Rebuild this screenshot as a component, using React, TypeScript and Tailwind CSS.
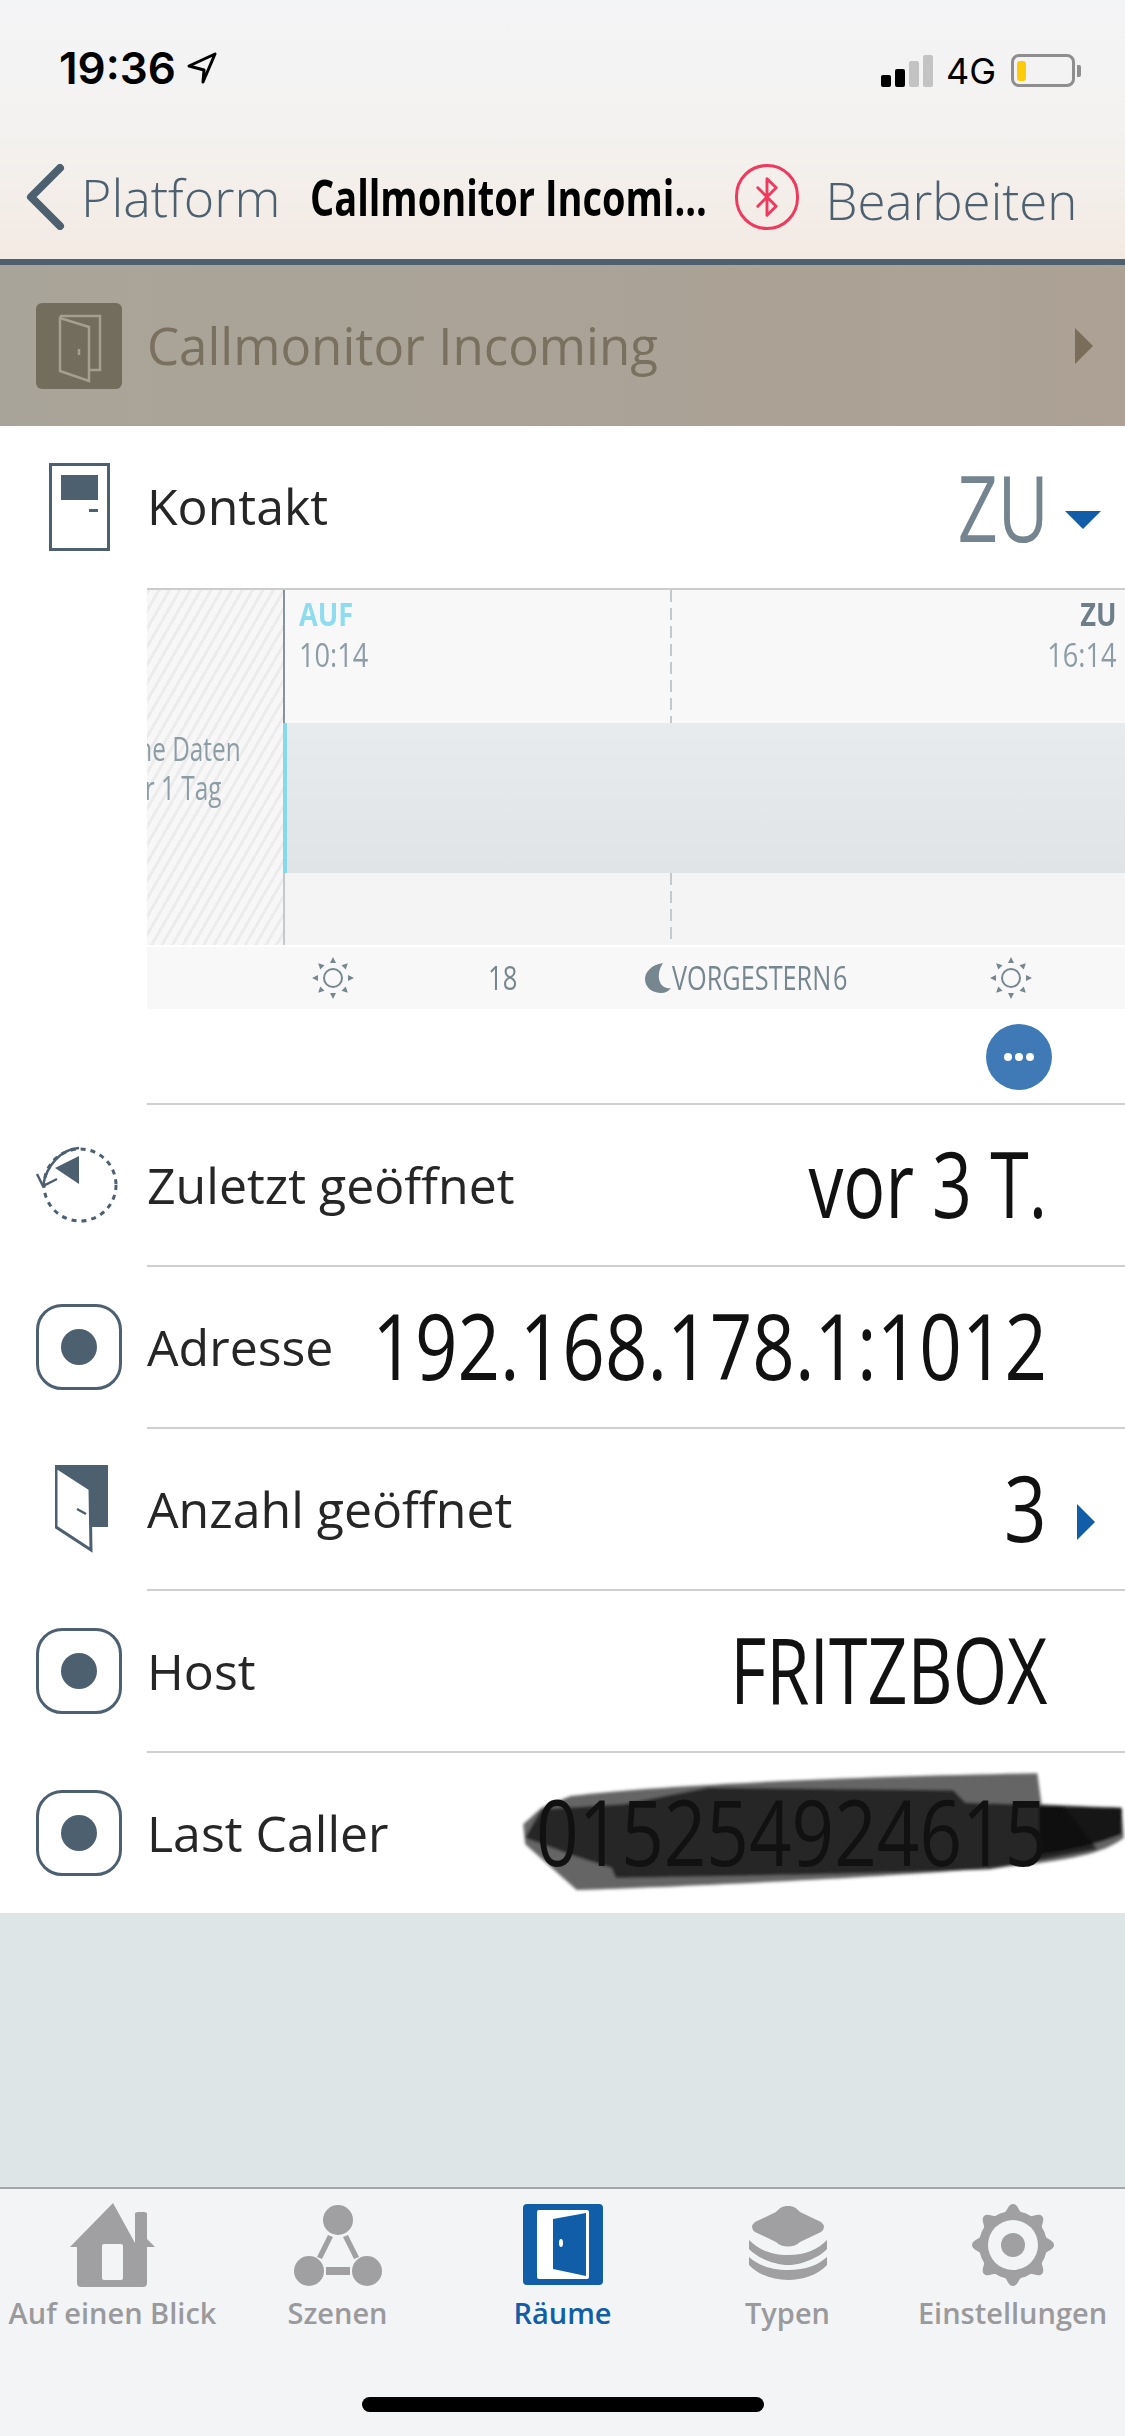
import { Bluetooth } from "lucide-react";

const slate = "#4d6070";

function RecordIcon() {
  return (
    <div className="flex h-[86px] w-[86px] items-center justify-center rounded-[26px] border-[3px] border-[#4d6070]">
      <div className="h-[36px] w-[36px] rounded-full bg-[#4d6070]" />
    </div>
  );
}

function HistoryIcon() {
  return (
    <svg width="86" height="78" viewBox="0 0 86 78" fill="none">
      <circle cx="44" cy="39" r="36" stroke={slate} strokeWidth="3" strokeDasharray="5 5" />
      <path d="M43 10 V38 L19 22 Z" fill={slate} />
      <path d="M43 2 C25 3 10 20 7 40" stroke={slate} strokeWidth="2.5" />
      <path d="M1 28 L7 40 L21 33" stroke={slate} strokeWidth="2.5" />
    </svg>
  );
}

function OpenDoorIcon() {
  return (
    <svg width="54" height="88" viewBox="0 0 54 88">
      <rect x="1" y="0" width="52" height="62" fill={slate} />
      <path d="M1 2 L35 24 L36 85 L1 62 Z" fill="#fff" stroke={slate} strokeWidth="3" />
      <path d="M22 44 L31 49" stroke={slate} strokeWidth="2.5" />
    </svg>
  );
}

function SunIcon() {
  const angles = [0, 45, 90, 135, 180, 225, 270, 315];
  return (
    <svg width="42" height="42" viewBox="0 0 42 42">
      <circle cx="21" cy="21" r="9" fill="none" stroke="#77878f" strokeWidth="2" />
      {angles.map((a) => (
        <path key={a} d="M21 0 L24 6 L18 6 Z" fill="#77878f" transform={`rotate(${a} 21 21)`} />
      ))}
    </svg>
  );
}

function Row({
  icon,
  label,
  children,
}: {
  icon: React.ReactNode;
  label: string;
  children?: React.ReactNode;
}) {
  return (
    <div className="flex h-[162px]">
      <div className="flex w-[147px] shrink-0 items-center justify-start pt-[2px] pl-[36px]">{icon}</div>
      <div className="relative flex flex-1 items-center justify-between border-t-2 border-[#cfcfcf]">
        <span className="text-[50px] whitespace-nowrap text-[#262626]">{label}</span>
        {children}
      </div>
    </div>
  );
}

function Value({ text, narrow }: { text: string; narrow?: boolean }) {
  return (
    <span
      className={
        narrow
          ? "mr-[78px] mb-[4px] -ml-[300px] origin-right scale-x-[0.76] text-[92px] leading-none whitespace-nowrap text-[#111111]"
          : "mr-[78px] mb-[4px] -ml-[300px] origin-right scale-x-[0.81] text-[92px] leading-none whitespace-nowrap text-[#111111]"
      }
    >
      {text}
    </span>
  );
}

function Scribble() {
  return (
    <svg
      className="absolute top-0 right-0"
      width="645"
      height="163"
      viewBox="0 36 1568 489"
      preserveAspectRatio="none"
    >
      <defs>
        <filter id="soft">
          <feGaussianBlur stdDeviation="4" />
        </filter>
      </defs>
      <g filter="url(#soft)">
        <path
          d="M220 165 C500 125 1000 105 1355 97 L1365 190 L1560 200 L1565 290 C1500 350 1400 375 900 410 C600 430 400 440 235 447 L110 310 L105 250 L150 200 Z"
          fill="#4a4a4a"
          fillOpacity="0.85"
        />
        <path
          d="M555 140 L1150 148 L1180 185 L1420 195 L1500 325 L1240 385 C1000 395 700 405 330 410 L320 380 L230 345 L110 290 L150 205 L350 190 Z"
          fill="#111"
          fillOpacity="0.72"
        />
        <path
          d="M1360 195 C1430 195 1500 200 1560 200 L1560 280 C1500 310 1430 330 1360 340 Z"
          fill="#000"
          fillOpacity="0.75"
        />
      </g>
    </svg>
  );
}

function HomeTab() {
  return (
    <svg width="85" height="84" viewBox="0 0 85 84">
      <path
        d="M43 0 L65 40 V11 Q65 9 68 9 H74 Q77 9 77 11 V36 L85 44 H77 V80 Q77 84 73 84 H11 Q7 84 7 80 V44 H0 Z"
        fill="#a0a0a2"
      />
      <rect x="32" y="41" width="21" height="36" rx="2" fill="#f3f4f6" />
    </svg>
  );
}

function ScenesTab() {
  return (
    <svg width="88" height="84" viewBox="0 0 88 84" fill="#a0a0a2">
      <circle cx="44" cy="17" r="15" />
      <circle cx="15" cy="68" r="15" />
      <circle cx="73" cy="68" r="15" />
      <rect x="32" y="64" width="24" height="8" />
      <path d="M34 32 L39 34 L28 56 L23 54 Z" />
      <path d="M54 32 L49 34 L60 56 L65 54 Z" />
    </svg>
  );
}

function RoomsTab() {
  return (
    <svg width="80" height="84" viewBox="0 0 80 84">
      <rect x="0" y="1" width="80" height="81" rx="4" fill="#115da8" />
      <rect x="14" y="7" width="52" height="69" rx="2" fill="#fff" />
      <path d="M30 16 L63 10 V73 L30 66 Z" fill="#115da8" />
      <ellipse cx="38" cy="40" rx="2" ry="4" fill="#fff" />
    </svg>
  );
}

function TypesTab() {
  return (
    <svg width="80" height="84" viewBox="0 0 80 84" fill="#a0a0a2">
      <path d="M40 3 C46 3 48 5 52 9 L73 19 Q79 24 73 29 L52 39 C46 45 34 45 28 39 L7 29 Q1 24 7 19 L28 9 C32 5 34 3 40 3 Z" />
      <path d="M1 37 C10 46 22 52 40 52 C58 52 70 46 79 37 V46 C72 54 54 62 40 62 C26 62 8 54 1 46 Z" />
      <path d="M1 54 C10 62 22 67 40 67 C58 67 70 62 79 54 V62 C70 72 54 77 40 77 C26 77 10 72 1 62 Z" />
    </svg>
  );
}

function SettingsTab() {
  const lobes = [0, 45, 90, 135, 180, 225, 270, 315];
  return (
    <svg width="84" height="84" viewBox="0 0 84 84" fill="#a0a0a2">
      <circle cx="42" cy="42" r="34" />
      {lobes.map((a) => (
        <path
          key={a}
          d="M33 10 C36 9 37 1 42 1 C47 1 48 9 51 10 Z"
          transform={`rotate(${a} 42 42)`}
        />
      ))}
      <circle cx="42" cy="42" r="25" fill="#f3f4f6" />
      <circle cx="42" cy="42" r="12" />
    </svg>
  );
}

const tabs = [
  { label: "Auf einen Blick", icon: <HomeTab /> },
  { label: "Szenen", icon: <ScenesTab /> },
  { label: "Räume", icon: <RoomsTab />, active: true },
  { label: "Typen", icon: <TypesTab /> },
  { label: "Einstellungen", icon: <SettingsTab /> },
];

export default function App() {
  return (
    <div className="flex h-[2436px] w-[1125px] flex-col overflow-hidden bg-[#dee5e7] font-['Open_Sans',sans-serif]">
      {/* status + nav */}
      <div className="flex h-[259px] flex-col bg-gradient-to-b from-[#f3f4f6] via-[#f3f2f0] to-[#f3eae3]">
        <div className="flex h-[100px] items-end justify-between pr-[44px] pb-[13px] pl-[59px] font-['Inter',sans-serif] text-black">
          <div className="flex items-center gap-[11px]">
            <span className="text-[44px] leading-[38px] font-semibold">19:36</span>
            <svg width="30" height="32" viewBox="0 0 30 32" fill="none">
              <path d="M28 2 L2 14 L17 18 L16 30 Z" stroke="#000" strokeWidth="3" strokeLinejoin="round" />
            </svg>
          </div>
          <div className="flex items-center">
            <div className="flex h-[32px] items-end gap-[4px]">
              <div className="h-[12px] w-[10px] rounded-[2px] bg-black" />
              <div className="h-[18px] w-[10px] rounded-[2px] bg-black" />
              <div className="h-[26px] w-[10px] rounded-[2px] bg-[#c3c3c3]" />
              <div className="h-[32px] w-[10px] rounded-[2px] bg-[#c3c3c3]" />
            </div>
            <span className="ml-[13px] text-[36px] leading-[32px]">4G</span>
            <div className="ml-[15px] flex h-[33px] w-[64px] items-center rounded-[8px] border-[3px] border-[#8e8e8e] pl-[3px]">
              <div className="h-[20px] w-[9px] rounded-[3px] bg-[#fdcb0a]" />
            </div>
            <div className="ml-[2px] h-[12px] w-[4px] rounded-r-[2px] bg-[#8e8e8e]" />
          </div>
        </div>
        <div className="flex flex-1 items-start pt-[64px]">
          <svg className="ml-[25px]" width="40" height="66" viewBox="0 0 40 66" fill="none">
            <path d="M35 4 L6 33 L35 62" stroke={slate} strokeWidth="8" strokeLinecap="round" strokeLinejoin="round" />
          </svg>
          <span className="ml-[16px] text-[52px] leading-[66px] font-light text-[#4d6070]">Platform</span>
          <span className="ml-[30px] w-[400px] origin-left scale-x-[0.76] text-[50px] leading-[66px] font-bold whitespace-nowrap text-black">
            Callmonitor Incomi...
          </span>
          <div className="ml-[25px] flex h-[66px] w-[64px] items-center justify-center rounded-full border-[3px] border-[#f0395f]">
            <Bluetooth size={44} strokeWidth={1.6} color="#f0395f" />
          </div>
          <span className="ml-[26px] text-[51px] leading-[72px] font-light text-[#4d6070]">Bearbeiten</span>
        </div>
      </div>
      <div className="h-[6px] bg-[#4d6070]" />

      {/* room header */}
      <div className="flex h-[161px] items-center bg-gradient-to-r from-[#a9a499] to-[#aca194] pr-[32px] pl-[36px]">
        <div className="flex h-[86px] w-[86px] items-center justify-center rounded-[6px] bg-[#736d5e]">
          <svg width="86" height="86" viewBox="0 0 86 86" fill="none" stroke="#a69f91" strokeWidth="2.5">
            <path d="M24 13 H64 V67 H53" />
            <path d="M24 15 L53 24 V78 L24 68 Z" />
            <path d="M43 46 V52" />
          </svg>
        </div>
        <span className="ml-[25px] flex-1 text-[51px] text-[#7a705f]">Callmonitor Incoming</span>
        <div className="h-0 w-0 border-y-[18px] border-l-[18px] border-y-transparent border-l-[#7a6d5a]" />
      </div>

      {/* content */}
      <div className="bg-white">
        <div className="flex h-[162px] items-center">
          <div className="flex w-[147px] justify-start pl-[49px]">
            <div className="relative h-[88px] w-[61px] border-[3px] border-[#4d6070]">
              <div className="mx-auto mt-[9px] h-[25px] w-[37px] bg-[#4d6070]" />
              <div className="absolute top-[43px] right-[9px] h-[3px] w-[9px] bg-[#4d6070]" />
            </div>
          </div>
          <span className="mb-[2px] flex-1 text-[50px] text-[#262626]">Kontakt</span>
          <span className="mr-[16px] origin-right scale-x-[0.76] text-[92px] leading-none text-[#748590]">ZU</span>
          <div className="mt-[26px] mr-[24px] h-0 w-0 border-x-[18px] border-t-[18px] border-x-transparent border-t-[#115da8]" />
        </div>

        {/* chart */}
        <div className="ml-[147px] flex h-[357px] border-t-2 border-[#cccccc]">
          <div className="flex w-[136px] shrink-0 items-center justify-end overflow-hidden bg-[repeating-linear-gradient(120deg,#ececec_0,#ececec_3px,#f7f7f7_3px,#f7f7f7_9px)]">
            <div className="mr-[42px] shrink-0 origin-right scale-x-[0.76] text-center text-[32px] leading-[39px] whitespace-nowrap text-[#8d9da6]">
              Keine Daten
              <br />
              für 1 Tag
            </div>
          </div>
          <div className="relative flex flex-1 flex-col border-l-2 border-[#c5c9cc]">
            <div className="absolute top-0 -left-[2px] h-[133px] w-[2px] bg-[#85939d]" />
            <div className="absolute top-0 left-[385px] h-[133px] w-[2px] bg-[repeating-linear-gradient(to_bottom,#c5c9cc_0,#c5c9cc_12px,transparent_12px,transparent_18px)]" />
            <div className="absolute bottom-0 left-[385px] h-[72px] w-[2px] bg-[repeating-linear-gradient(to_bottom,#c5c9cc_0,#c5c9cc_12px,transparent_12px,transparent_18px)]" />
            <div className="flex h-[133px] justify-between bg-[#f8f8f8] pt-[5px] pr-[8px] pl-[14px] text-[32px] leading-[38px]">
              <div>
                <div className="origin-left scale-x-[0.85] font-bold text-[#8fdcee]">AUF</div>
                <div className="mt-[3px] origin-left scale-x-[0.85] text-[#8d9da6]">10:14</div>
              </div>
              <div className="text-right">
                <div className="origin-right scale-x-[0.85] font-bold text-[#6f7f89]">ZU</div>
                <div className="mt-[3px] origin-right scale-x-[0.85] text-[#8d9da6]">16:14</div>
              </div>
            </div>
            <div className="relative h-[150px] bg-gradient-to-b from-[#e8ebed] to-[#e0e4e7]">
              <div className="absolute top-0 -left-[2px] h-full w-[4px] bg-[#86d9ea]" />
            </div>
            <div className="flex-1 bg-[#f4f4f4]" />
          </div>
        </div>

        {/* axis */}
        <div className="mt-[2px] ml-[147px] flex h-[62px] items-center bg-[#f8f8f8] text-[32px] text-[#77878f]">
          <div className="ml-[165px]">
            <SunIcon />
          </div>
          <span className="ml-[134px] w-[37px] origin-left scale-x-[0.8]">18</span>
          <svg className="ml-[120px]" width="26" height="30" viewBox="0 0 26 30">
            <path d="M18 0 C6 2 0 9 0 16 C0 25 8 30 16 30 C20 30 24 28 26 25 C14 27 10 12 18 0 Z" fill="#77878f" />
          </svg>
          <span className="ml-[1px] w-[220px] origin-left scale-x-[0.79] whitespace-nowrap [word-spacing:-6px]">
            VORGESTERN 6
          </span>
          <div className="ml-[98px]">
            <SunIcon />
          </div>
        </div>
        <div className="flex h-[94px] items-start justify-end pt-[15px] pr-[73px]">
          <div className="flex h-[66px] w-[66px] items-center justify-center gap-[3px] rounded-full bg-[#3f7ab6]">
            <div className="h-[8px] w-[8px] rounded-full bg-white" />
            <div className="h-[8px] w-[8px] rounded-full bg-white" />
            <div className="h-[8px] w-[8px] rounded-full bg-white" />
          </div>
        </div>

        <Row icon={<HistoryIcon />} label="Zuletzt geöffnet">
          <Value text="vor 3 T." narrow />
        </Row>
        <Row icon={<RecordIcon />} label="Adresse">
          <Value text="192.168.178.1:1012" />
        </Row>
        <Row
          icon={
            <div className="ml-[19px]">
              <OpenDoorIcon />
            </div>
          }
          label="Anzahl geöffnet"
        >
          <Value text="3" />
          <div className="absolute top-[75px] right-[30px] h-0 w-0 border-y-[18px] border-l-[18px] border-y-transparent border-l-[#115da8]" />
        </Row>
        <Row icon={<RecordIcon />} label="Host">
          <Value text="FRITZBOX" narrow />
        </Row>
        <Row icon={<RecordIcon />} label="Last Caller">
          <Scribble />
          <Value text="015254924615" />
        </Row>
      </div>

      <div className="flex-1" />

      {/* tab bar */}
      <div className="border-t-2 border-[#a4a8ab] bg-[#f3f4f6]">
        <div className="grid grid-cols-5 pt-[14px]">
          {tabs.map((tab) => (
            <div key={tab.label} className="flex flex-col items-center">
              <div className="flex h-[84px] items-center justify-center">{tab.icon}</div>
              <span
                className={
                  tab.active
                    ? "mt-[6px] text-[29px] leading-[40px] font-semibold whitespace-nowrap text-[#115da8]"
                    : "mt-[6px] text-[29px] leading-[40px] font-semibold whitespace-nowrap text-[#9a9a9c]"
                }
              >
                {tab.label}
              </span>
            </div>
          ))}
        </div>
        <div className="mx-auto mt-[64px] mb-[24px] h-[15px] w-[402px] rounded-full bg-black" />
      </div>
    </div>
  );
}
